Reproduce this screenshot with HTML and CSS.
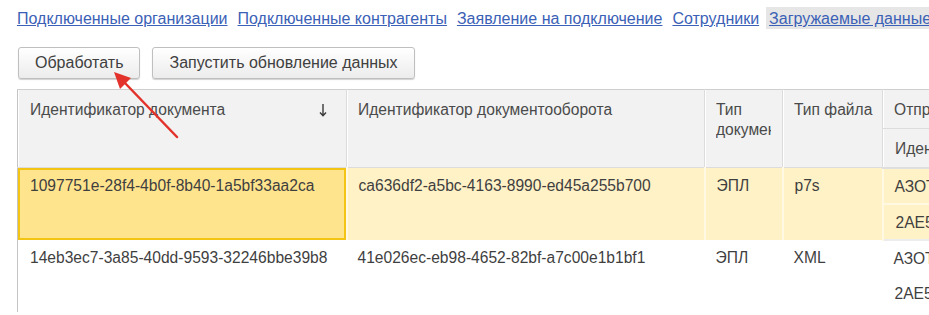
FILE: index.html
```html
<!DOCTYPE html>
<html lang="ru">
<head>
    <meta charset="UTF-8">
    <meta name="viewport" content="width=device-width, initial-scale=1.0">
    <title>Загружаемые данные</title>
    <link rel="stylesheet" href="styles.css">
</head>
<body>
    <div class="nav">
        <a href="#" class="link">Подключенные организации</a>
        <a href="#" class="link">Подключенные контрагенты</a>
        <a href="#" class="link">Заявление на подключение</a>
        <a href="#" class="link">Сотрудники</a>
        <a href="#" class="link active">Загружаемые данные</a>
    </div>

    <div class="toolbar">
        <button class="btn">Обработать</button>
        <button class="btn">Запустить обновление данных</button>
    </div>

    <table class="grid">
        <colgroup>
            <col class="w1"><col class="w2"><col class="w3"><col class="w4"><col class="w5">
        </colgroup>
        <thead>
            <tr>
                <th rowspan="2">
                    <div class="sortable">Идентификатор документа
                        <svg class="sort" width="8" height="14" viewBox="0 0 8 14"><path d="M4 1V12.5M1 9.5L4 12.8L7 9.5" fill="none" stroke="#3a3a3a" stroke-width="1.4"/></svg>
                    </div>
                </th>
                <th rowspan="2">Идентификатор документооборота</th>
                <th rowspan="2" class="wrap"><div class="clip">Тип документа</div></th>
                <th rowspan="2">Тип файла</th>
                <th class="sub">Отправитель</th>
            </tr>
            <tr>
                <th class="sub">Идентификатор</th>
            </tr>
        </thead>
        <tbody>
            <tr class="current">
                <td rowspan="2" class="selected">1097751e-28f4-4b0f-8b40-1a5bf33aa2ca</td>
                <td rowspan="2">ca636df2-a5bc-4163-8990-ed45a255b700</td>
                <td rowspan="2">ЭПЛ</td>
                <td rowspan="2">p7s</td>
                <td class="half">АЗОТ-Сервис</td>
            </tr>
            <tr class="current">
                <td class="half">2AE5D2A1-7C4B</td>
            </tr>
            <tr>
                <td rowspan="2">14eb3ec7-3a85-40dd-9593-32246bbe39b8</td>
                <td rowspan="2">41e026ec-eb98-4652-82bf-a7c00e1b1bf1</td>
                <td rowspan="2">ЭПЛ</td>
                <td rowspan="2">XML</td>
                <td class="half">АЗОТ-Сервис</td>
            </tr>
            <tr>
                <td class="half">2AE5D2A1-7C4B</td>
            </tr>
        </tbody>
    </table>

    <!-- стрелка-пометка поверх кнопки -->
    <svg class="pointer" width="929" height="315" viewBox="0 0 929 315">
        <line x1="177" y1="137" x2="124" y2="82" stroke="#e3322b" stroke-width="2.5" stroke-linecap="round"/>
        <polygon points="114,72 131,78 120,89" fill="#e3322b"/>
    </svg>
</body>
</html>
```

FILE: styles.css
```css
*{margin: 0;padding: 0;box-sizing: border-box;}
html,body{overflow: hidden;}
body{width: 929px;height: 315px;background: #fff;font-family: "Liberation Sans", Arial, sans-serif;font-size: 15.6px;color: #3f3f3f;position: relative;}

.nav{display: flex;gap: 4px;padding: 7px 0 0 14px;white-space: nowrap;font-size: 16px;}
.link{color: #3b61b6;text-decoration: underline;line-height: 16px;padding: 4px 3px 2px;}
.link.active{background-color: #e6e6e6;}

.toolbar{display: flex;gap: 12px;margin: 18px 0 0 18px;}
.btn{height: 32px;padding: 0 16px;font-family: inherit;font-size: 16px;color: #404040;border: 1px solid #bfbfbf;border-radius: 3px;background: linear-gradient(#ffffff, #ececec);box-shadow: 0 1px 1px rgba(0,0,0,.18);white-space: nowrap;}

.grid{margin: 10px 0 0 17px;border-collapse: collapse;table-layout: fixed;width: 1100px;line-height: 20px;border-top: 1px solid #cfcfcf;border-left: 1px solid #c4c4c4;}
.w1{width: 329px;}
.w2{width: 358px;}
.w3{width: 78px;}
.w4{width: 100px;}
.w5{width: 235px;}

th{background-color: #f2f2f2;font-weight: normal;text-align: left;vertical-align: top;color: #4a4a4a;padding: 10px 6px 0 11px;height: 39px;border-right: 1px solid #dcdcdc;border-bottom: 1px solid #dcdcdc;box-shadow: inset 1px 0 #fff;overflow: hidden;white-space: nowrap;}
th:first-child{padding-left: 12px;}
th.wrap{white-space: normal;}
thead tr:last-child th{border-bottom: 2px solid #dedede;}
.sortable{display: flex;justify-content: space-between;align-items: center;padding-right: 13px;}
.sort{display: block;}
.clip{overflow: hidden;width: 55px;}

td{vertical-align: top;padding: 8px 11px 0 11px;height: 36px;white-space: nowrap;overflow: hidden;}
td:first-child{padding-left: 12px;}
.current td{background-color: #fff2c6;border-right: 2px solid #fff8e2;}
.current td.half{border-bottom: 2px solid #fff8e2;}
.current + .current td{border-bottom: 2px solid #ececec;}
td.selected{background-color: #ffe48e !important;box-shadow: inset 0 0 0 2px #f4c414;}

.pointer{position: absolute;left: 0;top: 0;pointer-events: none;}
```
